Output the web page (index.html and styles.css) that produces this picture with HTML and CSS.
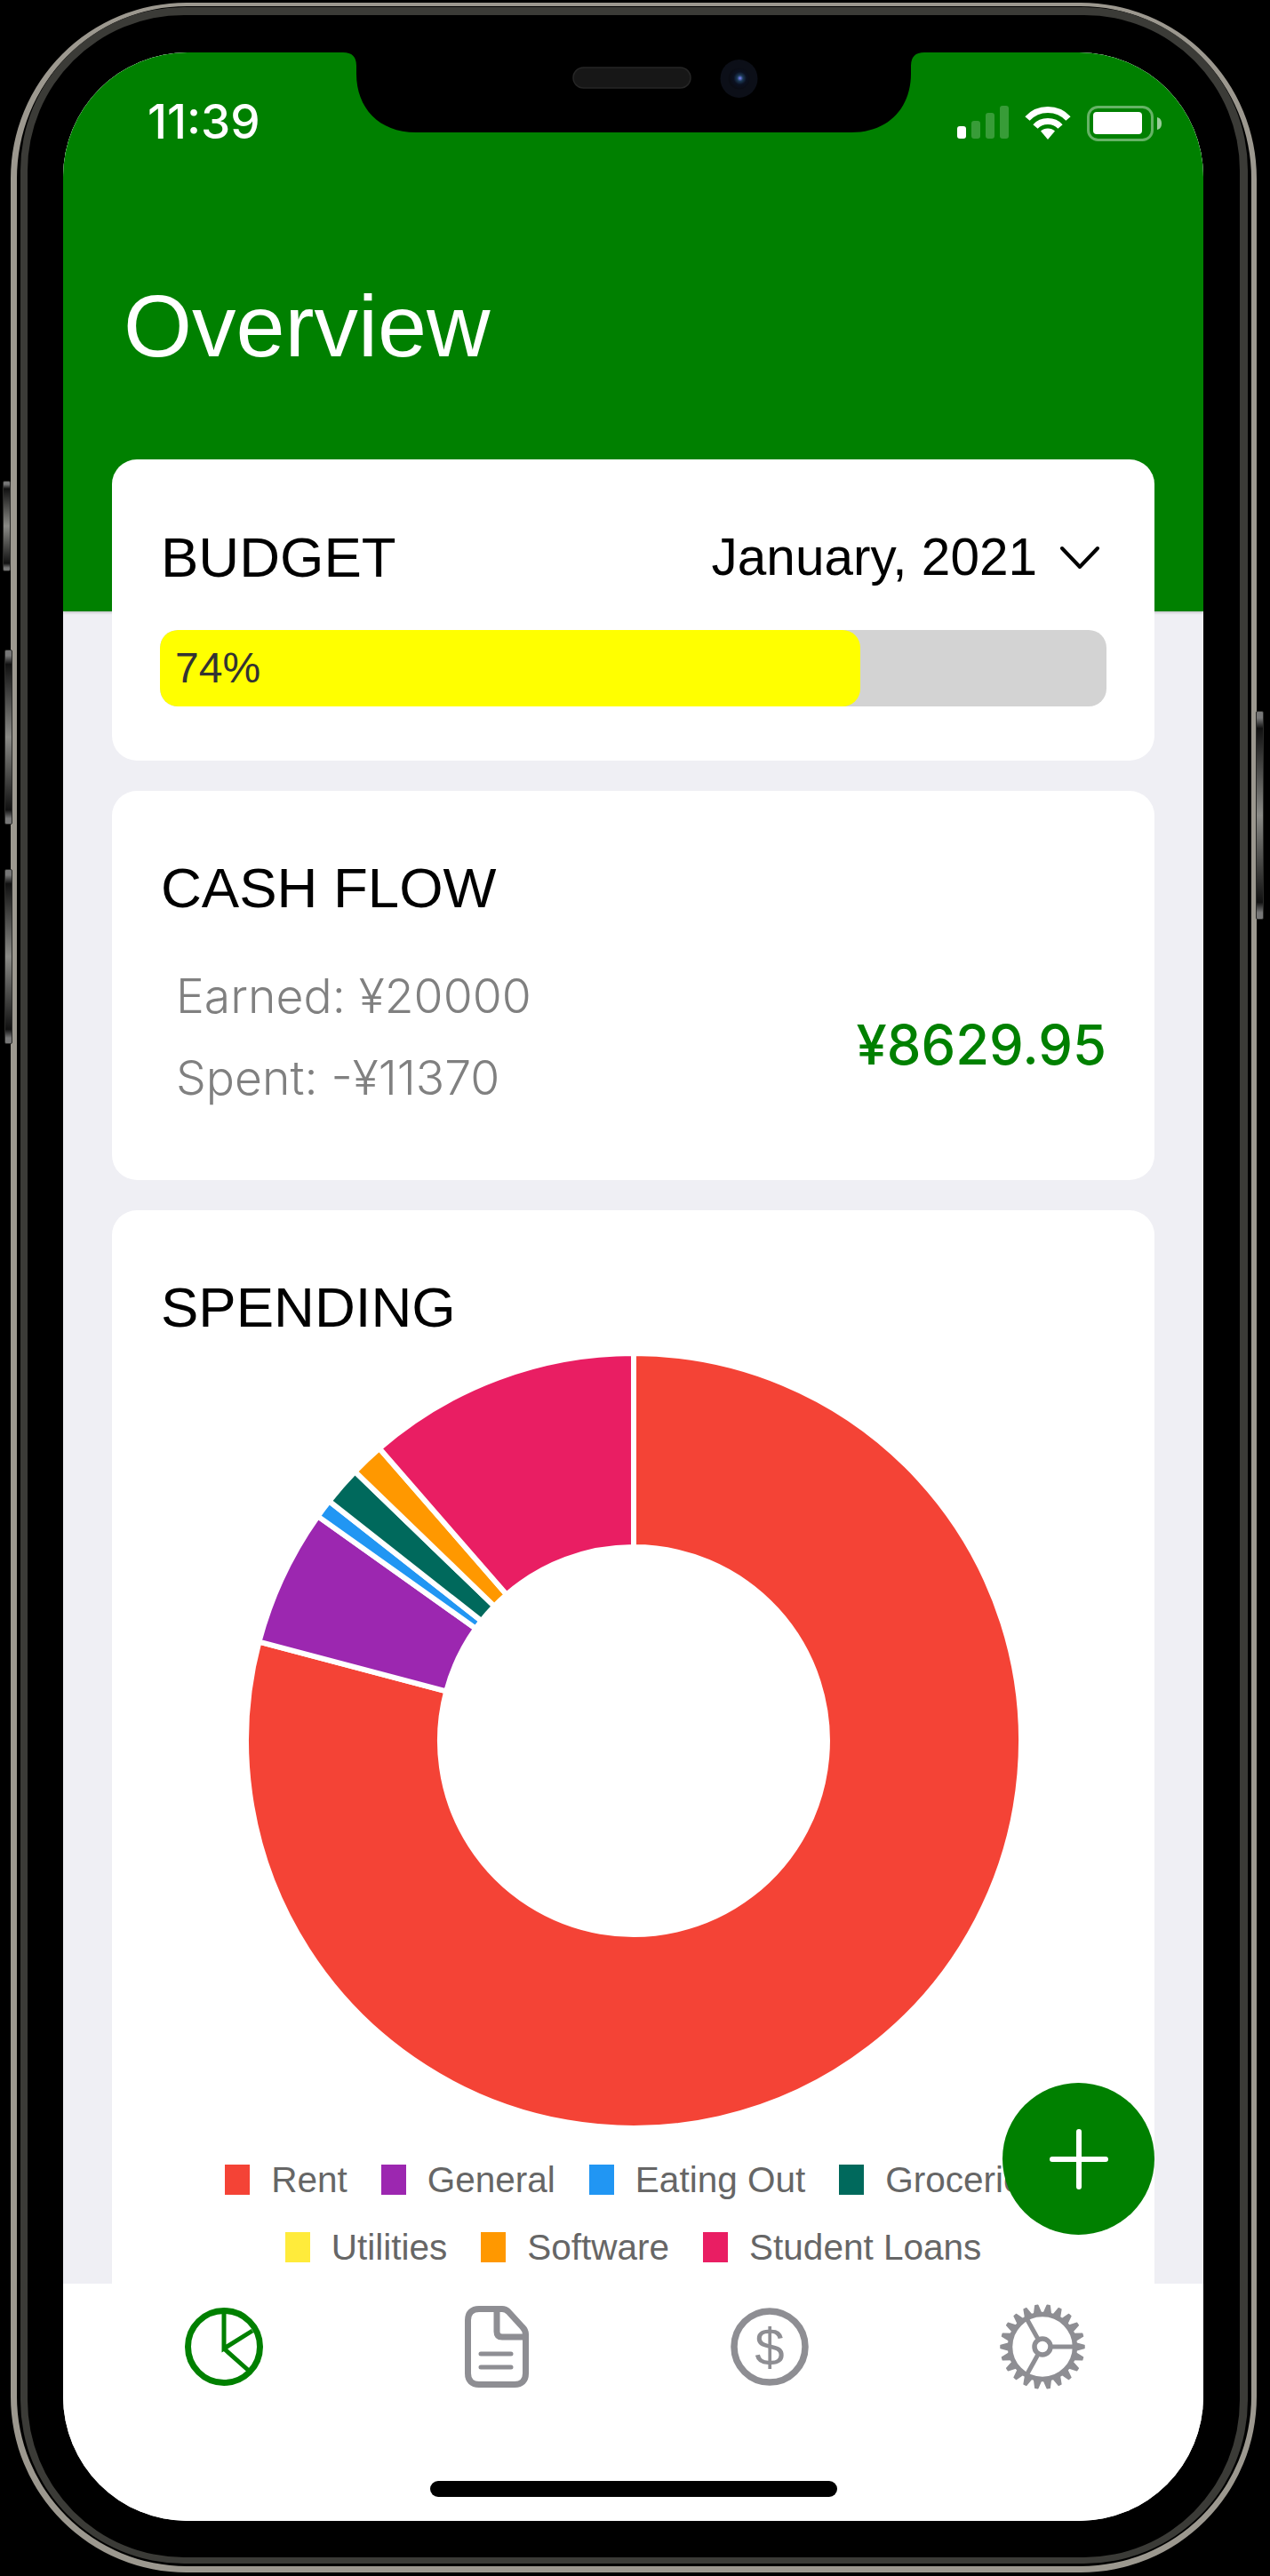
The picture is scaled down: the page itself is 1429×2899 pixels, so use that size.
FILE: index.html
```html
<!DOCTYPE html>
<html lang="en">
<head>
    <meta charset="UTF-8">
    <title>Overview</title>
    <link rel="stylesheet" href="styles.css">
</head>
<body>
<div class="phone">
    <div class="ring-outer"></div>
    <div class="ring-inner"></div>
    <div class="side-btn btn-mute"></div>
    <div class="side-btn btn-up"></div>
    <div class="side-btn btn-down"></div>
    <div class="side-btn btn-power"></div>

    <div class="screen">
        <div class="main">
            <div class="header">
                <div class="status">
                    <span class="time">11:39</span>
                    <div class="status-icons">
                        <svg width="58" height="37" viewBox="0 0 58 37" fill="#fff">
                            <rect x="0" y="23" width="10" height="14" rx="3"/>
                            <rect x="16" y="17" width="10" height="20" rx="3" opacity=".22"/>
                            <rect x="32" y="8" width="10" height="29" rx="3" opacity=".22"/>
                            <rect x="48" y="0" width="10" height="37" rx="3" opacity=".22"/>
                        </svg>
                        <svg width="52" height="38" viewBox="0 0 52 38" fill="none" stroke="#fff" stroke-width="7">
                            <path d="M3 14.5C15 1 37 1 49 14.5"/>
                            <path d="M12 23.5C19 15.5 33 15.5 40 23.5"/>
                            <path d="M18 28.5C22 24.5 30 24.5 34 28.5L26 38Z" fill="#fff" stroke="none"/>
                        </svg>
                        <svg width="84" height="40" viewBox="0 0 84 40" fill="#fff">
                            <rect x="1.5" y="1.5" width="72" height="37" rx="11" fill="none" stroke="#fff" stroke-width="3" opacity=".4"/>
                            <rect x="7" y="7" width="55" height="25" rx="4"/>
                            <path d="M79 13C83 14 84 17 84 20C84 23 83 26 79 27Z" opacity=".6"/>
                        </svg>
                    </div>
                </div>
                <h1 class="page-title">Overview</h1>
            </div>

            <div class="cards">
                <section class="card budget">
                    <div class="card-head">
                        <h2 class="card-title">BUDGET</h2>
                        <div class="month">
                            <span>January, 2021</span>
                            <svg width="44" height="26" viewBox="0 0 44 26" fill="none" stroke="#000" stroke-width="4" stroke-linecap="round" stroke-linejoin="round">
                                <path d="M2 3L22 24L42 3"/>
                            </svg>
                        </div>
                    </div>
                    <div class="progress">
                        <div class="progress-fill" style="width: 74%">74%</div>
                    </div>
                </section>

                <section class="card cash">
                    <h2 class="card-title">CASH FLOW</h2>
                    <div class="cash-row">
                        <div class="cash-list">
                            <div>Earned: ¥20000</div>
                            <div>Spent: -¥11370</div>
                        </div>
                        <div class="cash-total">¥8629.95</div>
                    </div>
                </section>

                <section class="card spending">
                    <h2 class="card-title">SPENDING</h2>
                    <svg class="donut" width="880" height="880" viewBox="-440 -440 880 880" stroke="#fff" stroke-width="6">
                        <path fill="#f44336" d="M0 -436A436 436 0 1 1 -421.5 -111.4L-210.8 -55.7A218 218 0 1 0 0 -218Z"/>
                        <path fill="#9c27b0" d="M-421.5 -111.4A436 436 0 0 1 -355.4 -252.6L-177.7 -126.3A218 218 0 0 0 -210.8 -55.7Z"/>
                        <path fill="#2196f3" d="M-355.4 -252.6A436 436 0 0 1 -342.6 -269.6L-171.3 -134.8A218 218 0 0 0 -177.7 -126.3Z"/>
                        <path fill="#00695c" d="M-342.6 -269.6A436 436 0 0 1 -313.6 -302.9L-156.8 -151.4A218 218 0 0 0 -171.3 -134.8Z"/>
                        <path fill="#ff9800" d="M-313.6 -302.9A436 436 0 0 1 -286.1 -329L-143 -164.5A218 218 0 0 0 -156.8 -151.4Z"/>
                        <path fill="#e91e63" d="M-286.1 -329A436 436 0 0 1 0 -436L0 -218A218 218 0 0 0 -143 -164.5Z"/>
                    </svg>
                    <ul class="legend">
                        <li><i class="c-rent"></i>Rent</li>
                        <li><i class="c-general"></i>General</li>
                        <li><i class="c-eating"></i>Eating Out</li>
                        <li><i class="c-groceries"></i>Groceries</li>
                        <li><i class="c-utilities"></i>Utilities</li>
                        <li><i class="c-software"></i>Software</li>
                        <li><i class="c-loans"></i>Student Loans</li>
                    </ul>
                </section>
            </div>
        </div>

        <nav class="tabs">
            <div class="tab">
                <svg width="88" height="88" viewBox="0 0 88 88" fill="none" stroke="#008000" stroke-width="5">
                    <circle cx="44" cy="44" r="40.5" stroke-width="7"/>
                    <path d="M44 5V46L76 26M44 46L72 71"/>
                </svg>
            </div>
            <div class="tab">
                <svg width="72" height="92" viewBox="0 0 72 92" fill="none" stroke="#8e8e93" stroke-width="7" stroke-linejoin="round">
                    <path d="M16 3.5H42C45 3.5 47 4.5 49 6.500L65 24C67.500 26.500 68.500 28.500 68.500 32V76C68.500 84 64 88.500 56 88.500H16C8 88.500 3.500 84 3.500 76V16C3.500 8 8 3.500 16 3.500Z"/>
                    <path d="M36 3.500V29C36 33 38 35 42 35H68"/>
                    <path d="M18 54H52M18 69H52" stroke-width="5" stroke-linecap="round"/>
                </svg>
            </div>
            <div class="tab">
                <svg width="88" height="88" viewBox="0 0 88 88">
                    <circle cx="44" cy="44" r="40" fill="none" stroke="#8e8e93" stroke-width="7.500"/>
                    <text class="dollar" x="44" y="65" text-anchor="middle">$</text>
                </svg>
            </div>
            <div class="tab">
                <svg width="98" height="98" viewBox="-49 -49 98 98" fill="none" stroke="#8e8e93">
                    <defs>
                        <path id="tooth" d="M-4.500 -36L-1.500 -47H1.500L4.500 -36ZM-4.500 36L-1.500 47H1.500L4.500 36Z" fill="#8e8e93" stroke-width="1.500" stroke-linejoin="round"/>
                    </defs>
                    <use href="#tooth" transform="rotate(8.18)"/>
                    <use href="#tooth" transform="rotate(24.55)"/>
                    <use href="#tooth" transform="rotate(40.91)"/>
                    <use href="#tooth" transform="rotate(57.27)"/>
                    <use href="#tooth" transform="rotate(73.64)"/>
                    <use href="#tooth" transform="rotate(90)"/>
                    <use href="#tooth" transform="rotate(106.36)"/>
                    <use href="#tooth" transform="rotate(122.73)"/>
                    <use href="#tooth" transform="rotate(139.09)"/>
                    <use href="#tooth" transform="rotate(155.45)"/>
                    <use href="#tooth" transform="rotate(171.82)"/>
                    <circle r="36.500" stroke-width="5.500"/>
                    <circle r="9" stroke-width="5.500"/>
                    <path d="M11 0H36M-5.500 -9.500L-18 -32M-5.500 9.500L-18 32" stroke-width="5"/>
                </svg>
            </div>
        </nav>

        <div class="home-bar"></div>

        <div class="fab">
            <svg width="66" height="68" viewBox="0 0 66 68" fill="none" stroke="#fff" stroke-width="6" stroke-linecap="round">
                <path d="M33 3V65M3 34H63"/>
            </svg>
        </div>

        <svg class="notch" width="654" height="90" viewBox="0 0 654 90">
            <defs>
                <radialGradient id="lens" cx=".55" cy=".48" r=".5">
                    <stop offset="0" stop-color="#7f86ff"/>
                    <stop offset=".28" stop-color="#1c3a55"/>
                    <stop offset=".6" stop-color="#0b1020"/>
                    <stop offset="1" stop-color="#0a0c14"/>
                </radialGradient>
            </defs>
            <path d="M0 0Q15 0 15 15V24C15 62 40 90 82 90H572C614 90 639 62 639 24V15Q639 0 654 0Z" fill="#000"/>
            <rect x="259" y="17" width="132" height="23" rx="11.500" fill="#171717" stroke="#262626" stroke-width="1.500"/>
            <ellipse cx="445.500" cy="29.500" rx="21" ry="21.500" fill="#0c0f18"/>
            <circle cx="445.500" cy="29.500" r="12" fill="url(#lens)"/>
        </svg>
    </div>
</div>
</body>
</html>
```

FILE: styles.css
```css
*{
    box-sizing: border-box;
}
html,body{
    margin: 0;
    padding: 0;
    background: #000;
}
h1,h2,ul{
    margin: 0;
    padding: 0;
    font-weight: normal;
}
body{
    font-family: "Liberation Sans", Arial, sans-serif;
}

/* device */
.phone{
    position: relative;
    width: 1429px;
    height: 2899px;
    padding: 59px 75px 62px 71px;
    overflow: hidden;
}
.ring-outer{
    position: absolute;
    left: 12px;
    right: 15px;
    top: 3px;
    bottom: 4px;
    border: solid #9c988f;
    border-width: 4px 6px 7px 7px;
    border-radius: 198px;
}
.ring-inner{
    position: absolute;
    left: 23px;
    right: 25px;
    top: 8px;
    bottom: 14px;
    border: solid #3b3b37;
    border-width: 9px 9px 7px 8px;
    border-radius: 184px;
}
.side-btn{
    position: absolute;
    width: 9px;
    background: linear-gradient(to bottom, #777 3%, #111 8%, #8a8a86 50%, #111 92%, #777 97%);
    border: 1px solid #2a2a28;
    border-radius: 2px;
}
.btn-mute{
    left: 3px;
    top: 541px;
    height: 102px;
}
.btn-up{
    left: 5px;
    top: 731px;
    height: 197px;
}
.btn-down{
    left: 5px;
    top: 978px;
    height: 197px;
}
.btn-power{
    right: 7px;
    top: 800px;
    height: 235px;
}

.screen{
    position: relative;
    width: 1283px;
    height: 2778px;
    display: flex;
    flex-direction: column;
    overflow: hidden;
    background: #fff;
    border-radius: 140px;
}
.notch{
    position: absolute;
    left: 315px;
    top: 0;
}

/* scrolling part */
.main{
    flex: 1;
    min-height: 0;
    overflow: hidden;
    background: #efeff4;
}
.header{
    height: 629px;
    padding: 60px 97px 0 93px;
    background: #008000;
    box-shadow: 0 1px 3px rgba(0,0,0,.25);
}
.status{
    display: flex;
    justify-content: space-between;
    align-items: flex-start;
    margin-right: -50px;
}
.time{
    margin-left: 2px;
    color: #fff;
    font-family: Inter, "Liberation Sans", sans-serif;
    font-size: 53px;
    font-weight: 500;
    line-height: 37px;
}
.status-icons{
    display: flex;
    align-items: flex-start;
    gap: 18px;
}
.page-title{
    margin: 148px 0 0 -25px;
    color: #fff;
    font-size: 99px;
    line-height: 120px;
}

.cards{
    display: flex;
    flex-direction: column;
    gap: 34px;
    margin: -171px 55px 0;
}
.card{
    position: relative;
    padding: 74px 54px 61px;
    background: #fff;
    border-radius: 28px;
}
.card-title{
    margin-left: 1px;
    font-size: 63.500px;
    line-height: 72px;
    color: #000;
}
.card-head{
    display: flex;
    justify-content: space-between;
    align-items: center;
    margin-bottom: 46px;
}
.month{
    display: flex;
    align-items: center;
    gap: 26px;
    margin-right: 8px;
    font-size: 58.500px;
    line-height: 72px;
    color: #000;
}
.progress{
    height: 86px;
    background: #d3d3d3;
    border-radius: 20px;
    overflow: hidden;
}
.progress-fill{
    height: 86px;
    padding-left: 17px;
    background: #ff0;
    border-radius: 20px;
    color: #333;
    font-size: 48px;
    line-height: 86px;
}

.cash{
    height: 438px;
    padding-top: 73px;
}
.cash-row{
    display: flex;
    justify-content: space-between;
    align-items: center;
    margin-top: 40px;
}
.cash-list{
    padding-left: 18px;
    color: #808080;
    font-family: Inter, "Liberation Sans", sans-serif;
    font-size: 53.500px;
    font-weight: 300;
    line-height: 92px;
}
.cash-total{
    margin-top: 16px;
    color: #008000;
    font-family: Inter, "Liberation Sans", sans-serif;
    font-size: 61.500px;
    font-weight: 500;
}

.spending{
    padding-top: 73px;
    height: 1300px;
}
.donut{
    display: block;
    margin: 12px auto 0;
}
.legend{
    display: flex;
    flex-wrap: wrap;
    justify-content: center;
    gap: 28px 38px;
    margin: 30px -30px 0;
    list-style: none;
    color: #666;
    font-size: 40.500px;
    line-height: 48px;
}
.legend li{
    display: flex;
    align-items: center;
    gap: 24px;
}
.legend i{
    width: 28px;
    height: 34px;
}
.c-rent{ background: #f44336; }
.c-general{ background: #9c27b0; }
.c-eating{ background: #2196f3; }
.c-groceries{ background: #00695c; }
.c-utilities{ background: #ffeb3b; }
.c-software{ background: #ff9800; }
.c-loans{ background: #e91e63; }

/* bottom */
.tabs{
    flex: none;
    display: flex;
    height: 267px;
    padding: 23px 27px 0;
    background: #fff;
}
.tab{
    flex: 1;
    height: 96px;
    display: flex;
    justify-content: center;
    align-items: center;
}
.dollar{
    font-size: 60px;
    fill: #8e8e93;
}
.home-bar{
    position: absolute;
    left: 413px;
    bottom: 27px;
    width: 458px;
    height: 18px;
    background: #000;
    border-radius: 9px;
}
.fab{
    position: absolute;
    left: 1057px;
    top: 2285px;
    width: 171px;
    height: 171px;
    display: flex;
    justify-content: center;
    align-items: center;
    background: #008000;
    border-radius: 50%;
}
```
